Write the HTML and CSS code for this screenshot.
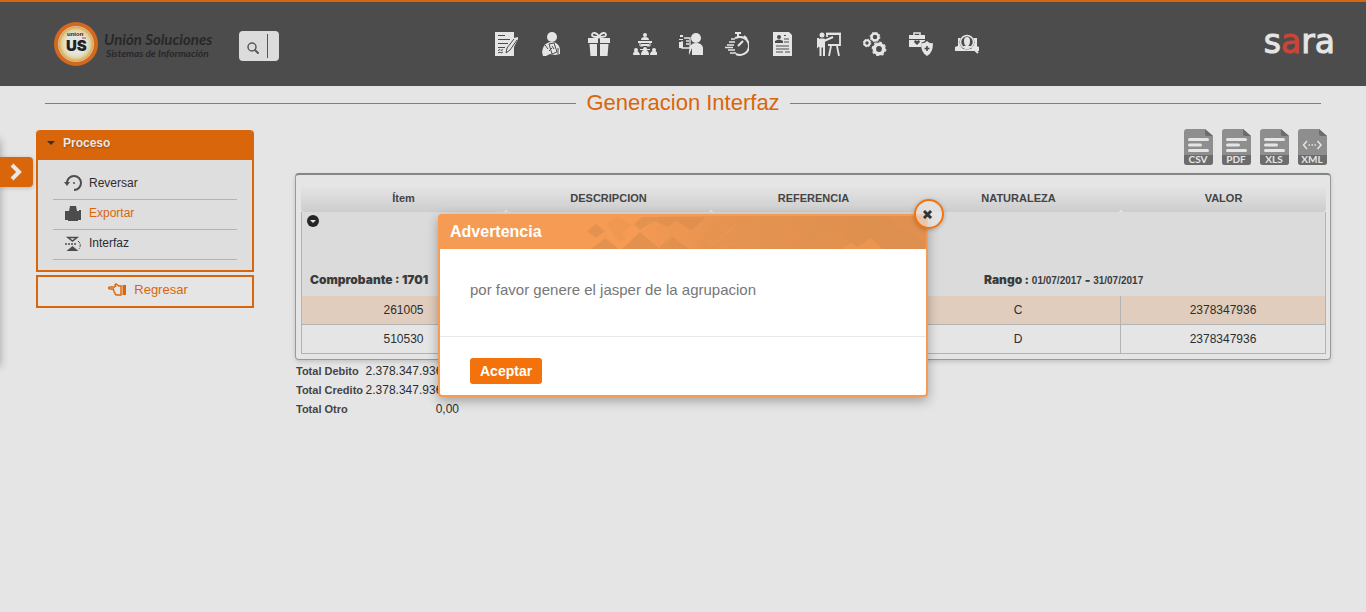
FILE: index.html
```html
<!DOCTYPE html>
<html lang="es">
<head>
<meta charset="utf-8">
<meta name="viewport" content="width=device-width, initial-scale=1">
<title>Generacion Interfaz</title>
<link rel="stylesheet" href="styles.css">
</head>
<body>
<header class="topbar">
  <a class="brand" href="#">
    <svg class="brand-mark" viewBox="0 0 46 44" aria-hidden="true">
      <defs>
        <radialGradient id="disc"><stop offset=".55" stop-color="#e5e5e3"/><stop offset=".7" stop-color="#e4dfc8"/><stop offset=".85" stop-color="#dfcf98"/><stop offset="1" stop-color="#d9a64a"/></radialGradient>
      </defs>
      <circle cx="23" cy="22" r="22" fill="#d2691f"/>
      <circle cx="23" cy="22" r="18" fill="#e3b896"/>
      <circle cx="23" cy="22" r="17" fill="url(#disc)"/>
      <text x="14" y="14" class="mark-small">union</text>
      <path d="M29 16h4" stroke="#c33" stroke-width="1"/>
      <text x="13" y="29" class="mark-big">US</text>
    </svg>
    <span class="brand-text"><span class="brand-name">Unión Soluciones</span><span class="brand-sub">Sistemas de Información</span></span>
  </a>
  <form class="search">
    <button class="search-button" type="button" aria-label="Buscar">
      <svg viewBox="0 0 14 14" width="14" height="14"><circle cx="6" cy="6" r="4" fill="none" stroke="#5a5a5a" stroke-width="1.500"/><path d="M9 9l3 3" stroke="#5a5a5a" stroke-width="2" stroke-linecap="round"/></svg>
    </button>
    <input class="search-input" type="text" aria-label="Texto a buscar">
  </form>
  <nav class="modules" aria-label="Módulos">
    <a href="#" aria-label="Contratos"><svg viewBox="0 0 24 24"><path fill="#e5e5e5" d="M0 0h19v6l4-1v2l-4 8v9H0z"/><path d="M3 3.500h7M3 7.500h12M3 11.500h10M3 15.500h7M3 18.500l2-1 1 1 2-1M3 21l2-1 1 1 2-1M19 7l-7 9-1 5 4-3 7-10" fill="none" stroke="#4c4c4c"/></svg></a>
    <a href="#" aria-label="Empleados"><svg viewBox="0 0 24 24"><circle cx="11" cy="5" r="5" fill="#e5e5e5"/><path fill="#e5e5e5" d="M3 14c1-2 4-4 8-4s8 3 8 8v4l-5 1-5-1-4 2H2l-1-4 1-4z"/><path d="M4 13l3 4M8 12l5-1 3 9-5 2zM8 19l3-3M11 14l2 3M17 16v6" fill="none" stroke="#4c4c4c" stroke-width="1"/></svg></a>
    <a href="#" aria-label="Beneficios"><svg viewBox="0 0 24 24"><path fill="#e5e5e5" d="M1 6h10v5H1zM13 6h10v5H13zM2.500 12H10v12H3.500zM13 12h8.500l-1 12H13z"/><path d="M12 5c-2-5-7-5-7-2 0 2 4 2 7 2 3 0 7 0 7-2 0-3-5-3-7 2z" fill="none" stroke="#e5e5e5" stroke-width="1.800"/></svg></a>
    <a href="#" aria-label="Organización"><svg viewBox="0 0 24 24" fill="#e5e5e5"><circle cx="12" cy="3" r="2"/><path d="M8 8q0-3 4-3t4 3zM5 9h14v2H5zM8 12h8v2H8zM7 17h10v1H7z"/><path d="M7 11v3h3M17 11v3h-3" fill="none" stroke="#e5e5e5"/><circle cx="3" cy="18" r="2"/><circle cx="12" cy="17" r="2"/><circle cx="21" cy="18" r="2"/><path d="M0 23q0-4 3-4t4 4zM8 23q0-5 4-5t4 5zM17 23q0-4 4-4t3 4z"/></svg></a>
    <a href="#" aria-label="Selección"><svg viewBox="0 0 24 24" fill="#e5e5e5"><circle cx="17" cy="6" r="5"/><path d="M10 23q-1-12 7-12t7 8v4H13v-7zM0 10h4v6H0zM1 3h3v2H1zM0 7h4v1H0z"/><path d="M5 6h6v10H3V9M7 9h3M7 12h3" fill="none" stroke="#e5e5e5" stroke-width="1.300"/></svg></a>
    <a href="#" aria-label="Tiempos"><svg viewBox="0 0 24 24" fill="none" stroke="#e5e5e5"><path d="M14 5a9 9 0 1 1-3 17M14 5l-4 1" stroke-width="2"/><path d="M10 1h6M13 1v4M19 4l3 3M13 14l5-5" stroke-width="2"/><path d="M6 7h4M4 10h6M2 13h7M0 15.500h8M3 18h7M5 21h6" stroke-width="1.300"/></svg></a>
    <a href="#" aria-label="Hoja de vida"><svg viewBox="0 0 24 24"><path fill="#e5e5e5" d="M2 0h16l3 3v21H2z"/><circle cx="8" cy="5" r="2" fill="#4c4c4c"/><path d="M4 11V9q4-3 8 0v2z" fill="#4c4c4c"/><path d="M13 3.500h2M13 7h5M13 10h5M5 14h13M5 17h13M5 20h7M14 20h5" stroke="#4c4c4c" stroke-width="1.200"/></svg></a>
    <a href="#" aria-label="Capacitación"><svg viewBox="0 0 24 24" fill="none" stroke="#e5e5e5"><path d="M10 5V2h13v11H11M14 14l-2 10M20 14l2 10" stroke-width="1.800"/><path d="M9 1.500h15" stroke-width="1.800"/><circle cx="5" cy="3" r="2.500" fill="#e5e5e5" stroke="none"/><path d="M2.500 7h5v8h-5z" fill="#e5e5e5"/><path d="M3.500 14v10M7 14v10M1 6v8l3-3M7 9l9-4" stroke-width="2"/></svg></a>
    <a href="#" aria-label="Procesos"><svg viewBox="0 0 24 24" fill="none" stroke="#e5e5e5"><circle cx="12" cy="5" r="3.500" stroke-width="2.500"/><circle cx="12" cy="5" r="4.900" stroke-dasharray="1.920 1.920"/><circle cx="4" cy="11" r="2.700" stroke-width="2"/><circle cx="4" cy="11" r="3.800" stroke-dasharray="1.500 1.500"/><circle cx="16" cy="17" r="4.700" stroke-width="3.600"/><circle cx="16" cy="17" r="6.800" stroke-width="1.200" stroke-dasharray="2.670 2.670"/></svg></a>
    <a href="#" aria-label="Salud ocupacional"><svg viewBox="0 0 24 24"><path d="M5 3V1h6v2" fill="none" stroke="#e5e5e5" stroke-width="1.500"/><path fill="#e5e5e5" d="M0 3h16v4H0zM0 8h16v1l-4 2v4H0z"/><path d="M8 13l-3-3 1-2 2 1 2-1 1 2z" fill="#4c4c4c"/><path fill="#e5e5e5" d="M18 9q3 3 6 2 0 10-6 13-6-3-6-13 3 1 6-2z"/><path d="M18 14v5M15.500 16.500h5" stroke="#4c4c4c" stroke-width="1.600"/></svg></a>
    <a href="#" aria-label="Consultas"><svg viewBox="0 0 24 24"><path fill="#e5e5e5" d="M3 6h4v8H3zM18 6h4v8h-4zM0 19v-4l5-2 3 4h8l3-4 5 2v4z"/><circle cx="12" cy="10" r="7.500" fill="#4c4c4c"/><circle cx="12" cy="10" r="6.500" fill="none" stroke="#e5e5e5" stroke-width="1.500"/><path d="M12 5q3 0 3 4t-2 5h-2q-2-1-2-5t3-4zM8 14h8l-2 2h-4z" fill="#e5e5e5"/><path d="M17 15l6 6" stroke="#e5e5e5" stroke-width="2"/></svg></a>
  </nav>
  <a class="sara" href="#">s<span class="sara-a">a</span>ra</a>
</header>

<aside class="drawer"><button class="drawer-button" type="button" aria-label="Abrir menú"><svg viewBox="0 0 14 18" width="14" height="18"><path d="M2 2l7 7-7 7" fill="none" stroke="#e8e8e8" stroke-width="4"/></svg></button></aside>

<h1 class="page-title">Generacion Interfaz</h1>

<main class="page">
  <aside class="side">
    <section class="panel">
      <h2 class="panel-title"><svg viewBox="0 0 8 4" width="8" height="4"><path d="M0 0h8L4 4z" fill="#333"/></svg>Proceso</h2>
      <ul class="actions">
        <li><a href="#"><svg viewBox="0 0 18 18" width="18" height="18"><path d="M3 9a7 7 0 1 1 7 7" fill="none" stroke="#4c4c4c" stroke-width="2"/><path d="M0 8h6l-3 4z" fill="#4c4c4c"/><circle cx="10" cy="9" r="1" fill="#4c4c4c"/></svg>Reversar</a></li>
        <li><a class="active" href="#"><svg viewBox="0 0 18 18" width="18" height="18"><path d="M6 2h6l1 5h2V6h2v10h-3v1H4v-1H1V7h4z" fill="#4c4c4c"/></svg>Exportar</a></li>
        <li><a href="#"><svg viewBox="0 0 18 18" width="18" height="18"><path d="M4 3.500h9L8.500 7z" fill="none" stroke="#4c4c4c" stroke-width="1.500"/><path d="M1 10h12" stroke="#4c4c4c" stroke-width="1.500" stroke-dasharray="2 1"/><path d="M8.500 12l6 5h-12z" fill="#4c4c4c"/><path d="M14 7q4 3 1 8" fill="none" stroke="#4c4c4c" stroke-dasharray="3 1"/></svg>Interfaz</a></li>
      </ul>
    </section>
    <a class="back" href="#"><svg viewBox="0 0 18 13" width="18" height="13"><path d="M7 4H2q-1.500 0-1.500 1T2 6h4M6 6q-1 1 0 2 0 2 1 2 0 2 2 2h4V3h-2L8 1Q7 1 7 2l1 2" fill="none" stroke="#d9660b" stroke-width="1.400"/><path d="M14.500 2H18v10h-3.500z" fill="#d9660b"/></svg>Regresar</a>
  </aside>

  <section class="content">
    <div class="exports">
      <a class="file" href="#" aria-label="Exportar CSV"><svg viewBox="0 0 29 36"><path d="M3 0h18l8 7v26q0 3-3 3H3q-3 0-3-3V3q0-3 3-3z" fill="#8e8e8e"/><path d="M21 0l8 7h-6q-2 0-2-2zM0 26h29v7q0 3-3 3H3q-3 0-3-3z" fill="#6c6c6c"/><path d="M5.500 10.500h18M5.500 16h11M5.500 21.500h18" stroke="#e5e5e5" stroke-width="3" stroke-linecap="round"/><text class="file-text" x="14" y="34">CSV</text></svg></a>
      <a class="file" href="#" aria-label="Exportar PDF"><svg viewBox="0 0 29 36"><path d="M3 0h18l8 7v26q0 3-3 3H3q-3 0-3-3V3q0-3 3-3z" fill="#8e8e8e"/><path d="M21 0l8 7h-6q-2 0-2-2zM0 26h29v7q0 3-3 3H3q-3 0-3-3z" fill="#6c6c6c"/><path d="M5.500 10.500h18M5.500 16h11M5.500 21.500h18" stroke="#e5e5e5" stroke-width="3" stroke-linecap="round"/><text class="file-text" x="14" y="34">PDF</text></svg></a>
      <a class="file" href="#" aria-label="Exportar XLS"><svg viewBox="0 0 29 36"><path d="M3 0h18l8 7v26q0 3-3 3H3q-3 0-3-3V3q0-3 3-3z" fill="#8e8e8e"/><path d="M21 0l8 7h-6q-2 0-2-2zM0 26h29v7q0 3-3 3H3q-3 0-3-3z" fill="#6c6c6c"/><path d="M5.500 10.500h18M5.500 16h11M5.500 21.500h18" stroke="#e5e5e5" stroke-width="3" stroke-linecap="round"/><text class="file-text" x="14" y="34">XLS</text></svg></a>
      <a class="file" href="#" aria-label="Exportar XML"><svg viewBox="0 0 29 36"><path d="M3 0h18l8 7v26q0 3-3 3H3q-3 0-3-3V3q0-3 3-3z" fill="#8e8e8e"/><path d="M21 0l8 7h-6q-2 0-2-2zM0 26h29v7q0 3-3 3H3q-3 0-3-3z" fill="#6c6c6c"/><path d="M9 12l-3.500 4L9 20M19.500 12l3.500 4-3.500 4" fill="none" stroke="#e5e5e5" stroke-width="1.500"/><path d="M10.500 16h8" stroke="#e5e5e5" stroke-width="1.500" stroke-dasharray="1.500 1.500"/><text class="file-text" x="14" y="34">XML</text></svg></a>
    </div>
    <div class="grid-box">
      <table class="grid">
        <thead><tr><th>Ítem</th><th>DESCRIPCION</th><th>REFERENCIA</th><th>NATURALEZA</th><th>VALOR</th></tr></thead>
        <tbody>
          <tr class="group">
            <td colspan="5">
              <button class="toggle" type="button" aria-label="Contraer grupo"><svg viewBox="0 0 12 12" width="12" height="12"><circle cx="6" cy="6" r="6" fill="#262626"/><path d="M3 5h6L6 8z" fill="#e5e5e5"/></svg></button>
              <div class="group-info"><span class="heavy">Comprobante : 1701</span><span class="range"><span class="heavy">Rango :</span> 01/07/2017 <span class="heavy">-</span> 31/07/2017</span></div>
            </td>
          </tr>
          <tr class="picked"><td>261005</td><td></td><td></td><td>C</td><td>2378347936</td></tr>
          <tr><td>510530</td><td></td><td></td><td>D</td><td>2378347936</td></tr>
        </tbody>
      </table>
    </div>
    <dl class="totals">
      <dt>Total Debito</dt><dd>2.378.347.936,00</dd>
      <dt>Total Credito</dt><dd>2.378.347.936,00</dd>
      <dt>Total Otro</dt><dd>0,00</dd>
    </dl>
  </section>
</main>

<div class="dialog" role="dialog" aria-labelledby="dialog-title">
  <div class="dialog-head">
    <h2 id="dialog-title">Advertencia</h2>
    <svg class="dialog-art" viewBox="0 0 342 33" preserveAspectRatio="xMaxYMid slice" aria-hidden="true">
      <defs><linearGradient id="fade"><stop offset="0" stop-color="#d98c4c" stop-opacity="0"/><stop offset=".35" stop-color="#db8e4e" stop-opacity=".6"/><stop offset="1" stop-color="#dc8f4f"/></linearGradient></defs>
      <path d="M35 33L75 0h267v33z" fill="url(#fade)"/>
      <path d="M3 15l9-7 9 7-9 7zM7 33l14-11 14 11zM38 33l18-17 20 17zM50 8l8-7h38L84 11 70 5 56 14zM90 4l6-3h26l-14 13zM74 33l14-13 18 13z" fill="#d98c4c" opacity=".6"/>
      <path d="M22 8l12-7 14 8-10 8 4 6-8 2z" fill="#e8924f" opacity=".4"/>
      <path d="M108 33l22-23 28 23zM178 25l24-24 22 22-16 10h-30zM222 33l28-26 22 26zM300 0l42 28V0zM136 0l14 14L166 0z" fill="#e5924f" opacity=".5"/>
      <path d="M258 33l9-6 6 4 14-9 12 11z" fill="#f09850" opacity=".7"/>
      <path d="M124 24l5 4 22-18M78 33l12-13 15 13M138 33l10-7 10 7" fill="none" stroke="#f3a463" opacity=".4"/>
    </svg>
  </div>
  <p class="dialog-text">por favor genere el jasper de la agrupacion</p>
  <div class="dialog-foot"><button class="accept" type="button">Aceptar</button></div>
  <button class="close" type="button" aria-label="Cerrar"><svg viewBox="0 0 10 10" width="10" height="10"><path d="M2 3l5 5M7 3L2 8" stroke="#333" stroke-width="3" stroke-linecap="square"/></svg></button>
</div>
</body>
</html>
```

FILE: styles.css
```css
* { box-sizing: border-box; }
body {
  margin: 0;
  min-height: 100vh;
  position: relative;
  background: #e5e5e5;
  color: #2d2d2d;
  font: 12px/16px "Liberation Sans", Arial, sans-serif;
}
a { color: inherit; text-decoration: none; }
button { font: inherit; padding: 0; border: 0; background: none; cursor: pointer; }
h1, h2, p, ul, dl, dd { margin: 0; padding: 0; }
svg { display: block; flex: none; }

.topbar {
  display: flex;
  align-items: center;
  height: 86px;
  padding: 0 31px 0 53px;
  border-top: 2px solid #d9660b;
  background: #4c4c4c;
}
.brand { display: flex; align-items: center; gap: 5px; width: 186px; color: #292729; }
.brand-mark { width: 46px; height: 44px; }
.mark-small { font: 700 6px "Liberation Sans", sans-serif; fill: #222; }
.mark-big { font: 900 15px "Inter", sans-serif; fill: #222; }
.brand-text { display: flex; flex-direction: column; padding-top: 2px; white-space: nowrap; font-family: Lato, sans-serif; font-style: italic; font-weight: 700; }
.brand-name { font-size: 15px; line-height: 15px; }
.brand-sub { padding-left: 2px; font-size: 10px; line-height: 12px; }

.search { display: flex; align-items: center; width: 40px; height: 30px; margin-top: 4px; border-radius: 4px; background: #dcdcdc; }
.search-button { flex: none; display: grid; place-items: center; width: 28px; height: 30px; padding-top: 3px; }
.search-input { width: 11px; height: 24px; padding: 0; border: 0; border-left: 1px solid #555; background: transparent; }

.modules { flex: 1; display: flex; justify-content: center; gap: 22px; padding-right: 68px; }
.modules svg { width: 24px; height: 24px; }
.sara { color: #e5e5e5; font: 33px/36px "DejaVu Sans", sans-serif; -webkit-text-stroke: 1px; padding-bottom: 4px; }
.sara-a { color: #cc4438; }

.drawer { position: absolute; left: -10px; top: 140px; width: 10px; height: 226px; box-shadow: 0 0 8px rgba(0, 0, 0, .3); }
.drawer-button {
  position: absolute;
  left: 10px;
  top: 17px;
  display: grid;
  place-items: center;
  width: 33px;
  height: 30px;
  border-radius: 0 4px 4px 0;
  background: #d9660b;
  box-shadow: 0 1px 4px rgba(0, 0, 0, .2);
}

.page-title {
  display: flex;
  align-items: center;
  gap: 10px;
  margin: 0 45px;
  padding-top: 4px;
  color: #d9660b;
  font-size: 22px;
  font-weight: 400;
  line-height: 26px;
}
.page-title::before, .page-title::after { content: ""; flex: 1; height: 1px; background: #d9660b; }

.page { display: flex; gap: 41px; padding: 13px 35px 0 36px; }
.side { flex: none; width: 218px; padding-top: 1px; }
.panel { border: 2px solid #d9660b; border-top: 0; border-radius: 4px 4px 0 0; background: #dedede; overflow: hidden; }
.panel-title {
  display: flex;
  align-items: center;
  gap: 8px;
  height: 30px;
  padding: 0 9px 4px;
  background: #d9660b;
  color: #e8e8e8;
  font-size: 12px;
  text-shadow: 0 1px 2px rgba(0, 0, 0, .3);
}
.actions { list-style: none; padding: 10px 15px; }
.actions a { display: flex; align-items: center; gap: 7px; height: 29px; padding: 0 11px 4px; }
.actions li { height: 30px; border-bottom: 1px solid #b3b3b3; }
.actions .active { color: #d9660b; }
.back {
  display: flex;
  align-items: center;
  justify-content: center;
  gap: 8px;
  height: 33px;
  margin-top: 3px;
  padding: 0 0 4px 6px;
  border: 2px solid #d9660b;
  color: #d9660b;
  font-size: 13px;
}

.content { flex: 1; min-width: 0; }
.exports { display: flex; justify-content: flex-end; gap: 9px; padding: 0 4px 8px 0; }
.file svg { width: 29px; height: 36px; }
.file-text { font: 700 10px Lato, sans-serif; fill: #e5e5e5; text-anchor: middle; }
.grid-box { padding: 4px 4px 5px 5px; border: 1px solid #999; border-top: 2px solid #858585; border-radius: 4px; box-shadow: 0 2px 4px rgba(0, 0, 0, .15); }
.grid { width: 100%; border-collapse: separate; border-spacing: 0; table-layout: fixed; }
.grid th {
  height: 33px;
  padding: 4px 0 0;
  border-radius: 0 0 4px 4px;
  background: linear-gradient(#e5e5e5 20%, #cdcdcd);
  color: #444;
  font-size: 11px;
}
.grid td { height: 29px; padding: 0; border-bottom: 1px solid #b3b3b3; border-right: 1px solid #b3b3b3; text-align: center; }
.grid td:first-child { border-left: 1px solid #b3b3b3; }
.grid .group td { height: 84px; padding: 3px 4px 7px 5px; border-bottom: 0; background: #dbdbdb; text-align: left; vertical-align: top; }
.toggle { display: block; }
.group-info { display: grid; grid-template-columns: 2fr 1fr; margin: 45px 0 0 3px; color: #3b3b3b; font-size: 10px; font-weight: 700; }
.heavy { font: 900 12px/16px "Inter", sans-serif; }
.picked { background: #e1cdbd; }

.totals { display: grid; grid-template-columns: 64px 100px; justify-content: start; row-gap: 3px; padding-top: 3px; color: #444; }
.totals dt { font-size: 11px; font-weight: 700; padding-left: 1px; white-space: nowrap; }
.totals dd { text-align: right; color: #2d2d2d; }

.dialog {
  position: absolute;
  left: 50%;
  top: 214px;
  width: 490px;
  margin-left: -245px;
  border: 2px solid #f59b53;
  border-radius: 4px;
  background: #fff;
  box-shadow: 0 4px 12px rgba(0, 0, 0, .3);
}
.dialog-head { display: flex; justify-content: space-between; height: 33px; background: #f69b54; color: #fff; }
.dialog-head h2 { padding-left: 10px; font-size: 16px; line-height: 32px; }
.dialog-art { width: 342px; height: 33px; }
.dialog-text { padding: 31px 30px 36px; border-bottom: 1px solid #e9e9e9; color: #777; font-size: 15px; line-height: 20px; }
.dialog-foot { padding: 21px 30px 11px; }
.accept { display: block; height: 26px; padding: 0 10px; border-radius: 3px; background: #f4720b; color: #fff; font-size: 14px; font-weight: 700; }
.close {
  position: absolute;
  right: -18px;
  top: -17px;
  display: grid;
  place-items: center;
  width: 30px;
  height: 30px;
  padding-right: 3px;
  border: 2px solid #f4720b;
  border-radius: 50%;
  background: rgba(235, 235, 235, .6);
  box-shadow: 0 1px 4px rgba(0, 0, 0, .25);
}
```
